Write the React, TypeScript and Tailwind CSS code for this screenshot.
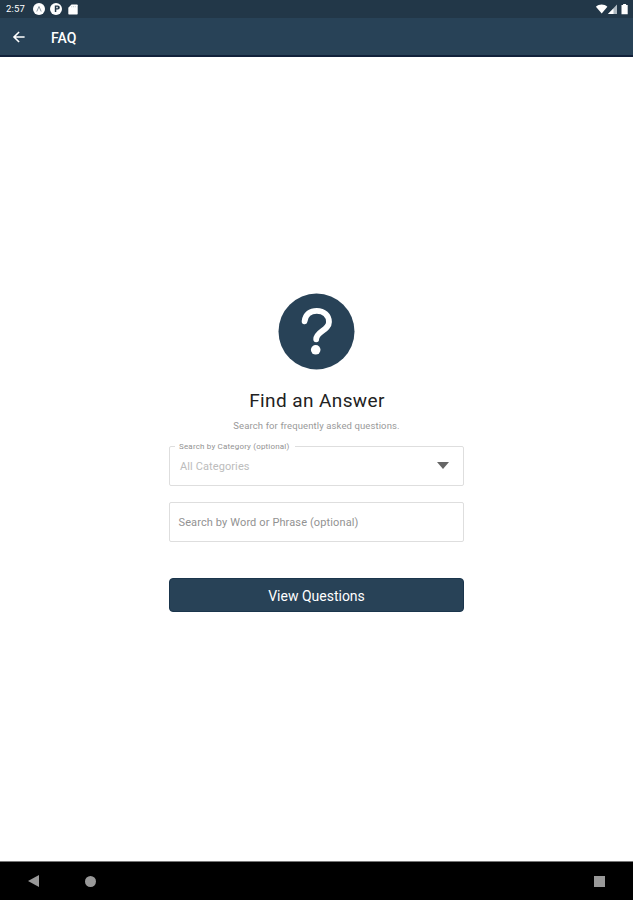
import React from "react";

function StatusBar() {
  return (
    <div className="flex h-[18px] items-center justify-between bg-[#223748] pl-[6px] pr-[4px] text-white">
      <div className="flex items-center">
        <span className="w-[27px] whitespace-nowrap text-[9.5px] leading-[18px] tracking-[0.2px]">2:57</span>
        <svg className="h-[12px] w-[12px]" viewBox="0 0 12 12">
          <circle cx="6" cy="6" r="6" fill="#fff" />
          <path d="M3.8 8.5 6 3.5l2.2 5" fill="none" stroke="#8b98a2" strokeWidth="1" />
        </svg>
        <svg className="ml-[5px] h-[12px] w-[12px]" viewBox="0 0 12 12">
          <circle cx="6" cy="6" r="6" fill="#fff" />
          <path d="M4.8 2.5h3a2 2 0 0 1 0 4H6.3V9H4.8z" fill="#223748" />
          <path d="M6.3 3.8h1.4v1.4H6.3z" fill="#fff" />
        </svg>
        <svg className="ml-[6px] h-[11px] w-[10px]" viewBox="0 0 10 11">
          <path d="M3.5.5H9a.7.7 0 0 1 .7.7v8.6a.7.7 0 0 1-.7.7H1a.7.7 0 0 1-.7-.7V3.7z" fill="#fff" />
          <path d="M3.7 2v1.3M5.5 2v1.3M7.3 2v1.3" stroke="#b5bec5" strokeWidth=".7" />
        </svg>
      </div>
      <svg className="h-[12px] w-[34px]" viewBox="0 0 34 12">
        <path d="M.9 3.8C4 .6 9.2 .6 12.4 3.8L6.7 10.6z" fill="#fff" />
        <path d="M13 11 22 1.5V11z" fill="#b0bac2" />
        <path d="M13 11 18.5 5.5V11z" fill="#fff" />
        <path d="M26.5 2h1.6V.9h3V2h1.6v9.2h-6.2z" fill="#fff" />
      </svg>
    </div>
  );
}

function AppBar() {
  return (
    <header className="flex h-[39px] items-center border-b-2 border-[#11213a] bg-[#284257] pl-[12px] text-white">
      <svg className="h-[14px] w-[14px]" viewBox="0 0 14 14" fill="none" stroke="#fff" strokeWidth="1.6">
        <path d="M12.6 7H2M7.1 2 2 7l5.1 5" />
      </svg>
      <h1 className="ml-[25px] mt-[2px] text-[14px] font-medium leading-[18px]">FAQ</h1>
    </header>
  );
}

function NavigationBar() {
  return (
    <nav className="flex h-[39px] items-center border-t border-[#777] bg-black pl-[28px] pr-[28px]">
      <svg className="h-[12px] w-[11px]" viewBox="0 0 11 12">
        <path d="M0 6 11 0v12z" fill="#999" />
      </svg>
      <span className="ml-[46px] h-[11px] w-[11px] rounded-full bg-[#999]" />
      <span className="ml-auto h-[11px] w-[11px] bg-[#999]" />
    </nav>
  );
}

export default function App() {
  return (
    <div className="flex h-[900px] w-full flex-col overflow-hidden bg-white font-['Roboto',sans-serif]">
      <StatusBar />
      <AppBar />
      <main className="flex flex-1 flex-col items-center pt-[236px]">
        <svg className="h-[77px] w-[77px]" viewBox="0 0 77 77">
          <circle cx="38.5" cy="38.5" r="38" fill="#284257" />
          <path
            d="M26.6 28.3C27.4 21 32.5 17.8 38.8 17.8c7 0 12.2 4.4 12.2 11.2 0 8.4-12.8 9.4-12.8 17.3"
            fill="none"
            stroke="#fff"
            strokeWidth="5.8"
            strokeLinecap="round"
          />
          <circle cx="37.7" cy="56.8" r="4.8" fill="#fff" />
        </svg>
        <h2 className="mt-[19px] whitespace-nowrap pl-[1px] text-[19px] leading-[24px] tracking-[0.4px] text-[#222]">
          Find an Answer
        </h2>
        <p className="mt-[7px] whitespace-nowrap text-[9.5px] leading-[12px] tracking-[0.11px] text-[#999]">
          Search for frequently asked questions.
        </p>
        <fieldset className="mt-[10px] h-[44px] w-[295px] rounded-[2px] border border-[#dedede] pl-[5px] pr-[14px]">
          <legend className="h-[9px] whitespace-nowrap pl-[4px] pr-[6px] text-[8px] leading-[10px] tracking-[0.18px] text-[#929292]">
            Search by Category (optional)
          </legend>
          <div className="flex h-[28px] items-center justify-between pl-[5px]">
            <span className="pt-[3px] text-[11px] leading-[14px] tracking-[0.1px] text-[#bcbcbc]">All Categories</span>
            <svg className="h-[7px] w-[12px]" viewBox="0 0 12 7">
              <path d="M0 0h12L6 7z" fill="#666" />
            </svg>
          </div>
        </fieldset>
        <div className="mt-[16px] flex h-[40px] w-[295px] items-center rounded-[2px] border border-[#dedede] pl-[8.5px] pt-[2px] text-[11px] tracking-[0.12px] text-[#929292]">
          Search by Word or Phrase (optional)
        </div>
        <button className="mt-[36px] h-[34px] w-[295px] rounded-[4px] border border-[#1a354c] bg-[#284257] pt-[2px] text-[14px] leading-[18px] text-white">
          View Questions
        </button>
      </main>
      <NavigationBar />
    </div>
  );
}
